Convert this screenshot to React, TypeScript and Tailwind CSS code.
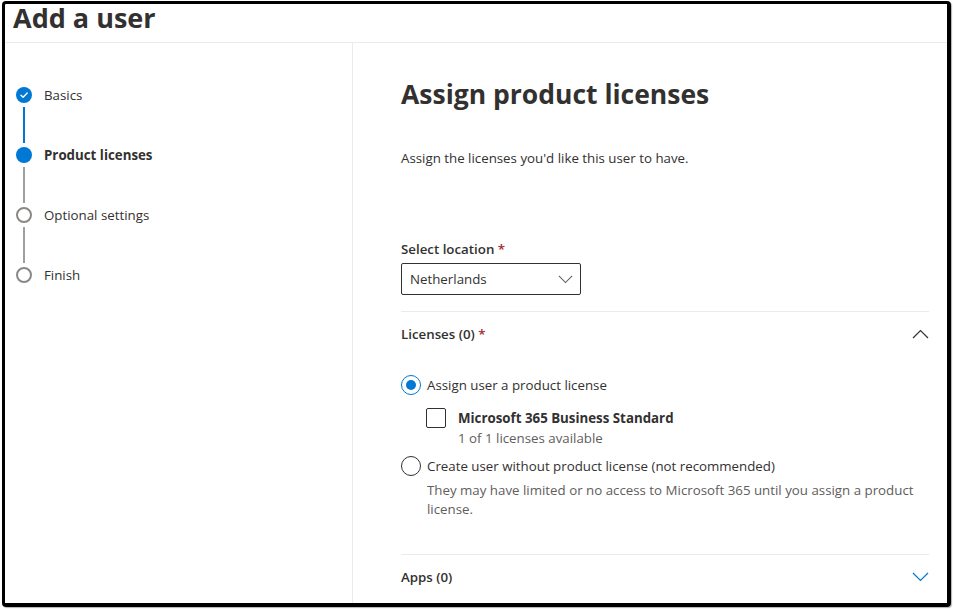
function ChevronUp({ className }: { className?: string }) {
  return (
    <svg width="17" height="10" viewBox="0 0 17 10" className={className} fill="none">
      <path d="M1 9 L8.5 1.5 L16 9" stroke="currentColor" strokeWidth="1.2" />
    </svg>
  );
}

function ChevronDown({ className }: { className?: string }) {
  return (
    <svg width="17" height="10" viewBox="0 0 17 10" className={className} fill="none">
      <path d="M1 1 L8.5 8.5 L16 1" stroke="currentColor" strokeWidth="1.2" />
    </svg>
  );
}

function Connector({ active }: { active?: boolean }) {
  return (
    <div className="h-[44px] pl-[7px] py-[4px]">
      <div className={`h-full w-[2px] ${active ? "bg-[#0078d4]" : "bg-[#a19f9d]"}`} />
    </div>
  );
}

export default function App() {
  return (
    <div
      className="w-[953px] h-[609px] bg-white pl-[2px] pt-[1px] text-[#323130]"
      style={{ fontFamily: '"Open Sans", sans-serif' }}
    >
      <div className="w-[949px] h-[606px] border-t-[3px] border-l-[3px] border-r-[4px] border-b-[4px] border-black rounded-[4px] flex flex-col overflow-hidden shadow-[1px_1px_1px_rgba(0,0,0,0.3)]">
        {/* Header */}
        <div className="h-[39px] shrink-0 border-b border-[#edebe9] pl-[8px]">
          <div className="mt-[2px] text-[27px] leading-[24px] font-bold text-[#323130]">Add a user</div>
        </div>

        {/* Body */}
        <div className="flex flex-1 min-h-0">
          {/* Left stepper */}
          <div className="w-[348px] shrink-0 border-r border-[#edebe9] pl-[11px] pt-[44px]">
            <div className="flex items-center h-[16px] gap-[12px]">
              <div className="w-[16px] h-[16px] rounded-full bg-[#0078d4] flex items-center justify-center">
                <svg width="10" height="10" viewBox="0 0 10 10" fill="none">
                  <path d="M2 5.2 L4.1 7.2 L8.2 3" stroke="white" strokeWidth="1.4" strokeLinecap="round" strokeLinejoin="round" />
                </svg>
              </div>
              <span className="text-[13.3px] leading-[20px]">Basics</span>
            </div>
            <Connector active />
            <div className="flex items-center h-[16px] gap-[12px]">
              <div className="w-[16px] h-[16px] rounded-full bg-[#0078d4]" />
              <span className="text-[13.3px] leading-[20px] font-bold">Product licenses</span>
            </div>
            <Connector />
            <div className="flex items-center h-[16px] gap-[12px]">
              <div className="w-[16px] h-[16px] rounded-full border-2 border-[#8a8886] bg-white" />
              <span className="text-[13.3px] leading-[20px]">Optional settings</span>
            </div>
            <Connector />
            <div className="flex items-center h-[16px] gap-[12px]">
              <div className="w-[16px] h-[16px] rounded-full border-2 border-[#8a8886] bg-white" />
              <span className="text-[13.3px] leading-[20px]">Finish</span>
            </div>
          </div>

          {/* Right content */}
          <div className="flex-1 pl-[48px] pr-[18px] flex flex-col">
            <h1 className="mt-[33px] text-[26.5px] leading-[36px] font-bold">Assign product licenses</h1>
            <p className="mt-[36px] text-[13.3px] leading-[20px]">Assign the licenses you'd like this user to have.</p>

            <label className="mt-[71px] text-[13.3px] leading-[20px] font-semibold">
              Select location <span className="text-[#a4262c]">*</span>
            </label>
            <div className="mt-[4px] w-[180px] h-[32px] border border-[#323130] rounded-[2px] flex items-center justify-between pl-[8px] pr-[7px]">
              <span className="text-[13.3px] leading-[20px]">Netherlands</span>
              <ChevronDown className="text-[#605e5c] w-[15px] h-[9px]" />
            </div>

            <div className="mt-[16px] h-px bg-[#edebe9]" />

            <div className="h-[44px] flex items-center justify-between">
              <span className="text-[13.3px] leading-[20px] font-semibold">
                Licenses (0) <span className="text-[#a4262c]">*</span>
              </span>
              <ChevronUp className="text-[#323130]" />
            </div>

            <div className="mt-[19px] flex items-center h-[20px] gap-[6px]">
              <div className="w-[20px] h-[20px] rounded-full border border-[#0078d4] flex items-center justify-center">
                <div className="w-[10px] h-[10px] rounded-full bg-[#0078d4]" />
              </div>
              <span className="text-[13.3px] leading-[20px]">Assign user a product license</span>
            </div>

            <div className="mt-[13px] pl-[25px] flex gap-[12px]">
              <div className="w-[20px] h-[20px] border border-[#323130] rounded-[2px] shrink-0" />
              <div className="flex flex-col">
                <span className="text-[13.3px] leading-[20px] font-bold">Microsoft 365 Business Standard</span>
                <span className="text-[13.3px] leading-[20px] text-[#605e5c]">1 of 1 licenses available</span>
              </div>
            </div>

            <div className="mt-[8px] flex items-center h-[20px] gap-[6px]">
              <div className="w-[20px] h-[20px] rounded-full border border-[#323130]" />
              <span className="text-[13.3px] leading-[20px]">Create user without product license (not recommended)</span>
            </div>
            <p className="mt-[5px] pl-[26px] text-[13.3px] leading-[19px] text-[#605e5c]">
              They may have limited or no access to Microsoft 365 until you assign a product
              <br />
              license.
            </p>

            <div className="mt-[35px] h-px bg-[#edebe9]" />
            <div className="h-[44px] flex items-center justify-between">
              <span className="text-[13.3px] leading-[20px] font-semibold">Apps (0)</span>
              <ChevronDown className="text-[#0078d4]" />
            </div>
          </div>
        </div>
      </div>
    </div>
  );
}
